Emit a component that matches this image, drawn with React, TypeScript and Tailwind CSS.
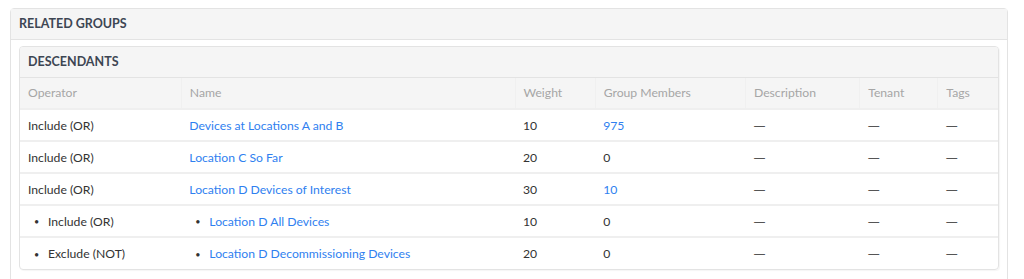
import React from "react";

type Row = {
  op: string;
  name: string;
  weight: string;
  members: string;
  membersLink: boolean;
  nested?: boolean;
};

const rows: Row[] = [
  { op: "Include (OR)", name: "Devices at Locations A and B", weight: "10", members: "975", membersLink: true },
  { op: "Include (OR)", name: "Location C So Far", weight: "20", members: "0", membersLink: false },
  { op: "Include (OR)", name: "Location D Devices of Interest", weight: "30", members: "10", membersLink: true },
  { op: "Include (OR)", name: "Location D All Devices", weight: "10", members: "0", membersLink: false, nested: true },
  { op: "Exclude (NOT)", name: "Location D Decommissioning Devices", weight: "20", members: "0", membersLink: false, nested: true },
];

const headers = [
  { label: "Operator", w: "w-[161px]" },
  { label: "Name", w: "w-[333px]" },
  { label: "Weight", w: "w-[80px]" },
  { label: "Group Members", w: "w-[150px]" },
  { label: "Description", w: "w-[114px]" },
  { label: "Tenant", w: "w-[78px]" },
  { label: "Tags", w: "w-[60px]" },
];

// em dash placeholder for empty values
const Dash = () => <span className="font-['DejaVu_Sans',sans-serif] text-[12px] text-[#555]">—</span>;

const Bullet = ({ children }: { children: React.ReactNode }) => (
  <span className="flex items-center">
    <span className="w-[20px] pl-[6px] text-[9px] text-[#333]">•</span>
    {children}
  </span>
);

export default function App() {
  return (
    <div className="min-h-screen bg-white pl-[10px] pr-[16px] pt-[8px] font-['Lato',sans-serif] text-[12.2px] text-[#333]">
      <div className="rounded-t-[4px] border border-[#e3e3e3] bg-white">
        <div className="flex h-[31px] items-center border-b border-[#e3e3e3] bg-[#f5f5f5] px-[8px] pt-[1px] text-[12.5px] font-bold text-[#3d4653]">
          RELATED GROUPS
        </div>
        <div className="px-[8px] pt-[6px] pb-[10px]">
          <div className="overflow-hidden rounded-[4px] border border-[#e3e3e3] shadow-[1px_1px_1px_rgba(0,0,0,0.04)]">
            <div className="flex h-[31px] items-center border-b border-[#e3e3e3] bg-[#f5f5f5] px-[8px] pt-[1px] text-[12.5px] font-bold text-[#3d4653]">
              DESCENDANTS
            </div>
            <table className="w-full table-fixed border-collapse">
              <thead>
                <tr className="h-[31px] bg-[#f5f5f5] text-[#a6a6a6]">
                  {headers.map((h, i) => (
                    <th
                      key={h.label}
                      className={`${h.w} px-[8px] text-left font-normal ${i < headers.length - 1 ? "border-r border-[#f0f0f0]" : ""}`}
                    >
                      {h.label}
                    </th>
                  ))}
                </tr>
              </thead>
              <tbody>
                {rows.map((r, i) => (
                  <tr key={i} className="h-[32px] border-t-2 border-[#efefef]">
                    <td className="px-[8px] pt-[2px]">
                      {r.nested ? <Bullet>{r.op}</Bullet> : r.op}
                    </td>
                    <td className="px-[8px] pt-[2px] text-[#2f7ff0]">
                      {r.nested ? (
                        <Bullet>
                          <a className="text-[#2f7ff0]">{r.name}</a>
                        </Bullet>
                      ) : (
                        <a className="text-[#2f7ff0]">{r.name}</a>
                      )}
                    </td>
                    <td className="px-[8px] pt-[2px]">{r.weight}</td>
                    <td className={`px-[8px] pt-[2px] ${r.membersLink ? "text-[#2f7ff0]" : ""}`}>{r.members}</td>
                    <td className="px-[8px] pt-[2px]"><Dash /></td>
                    <td className="px-[8px] pt-[2px]"><Dash /></td>
                    <td className="px-[8px] pt-[2px]"><Dash /></td>
                  </tr>
                ))}
              </tbody>
            </table>
          </div>
        </div>
      </div>
    </div>
  );
}
